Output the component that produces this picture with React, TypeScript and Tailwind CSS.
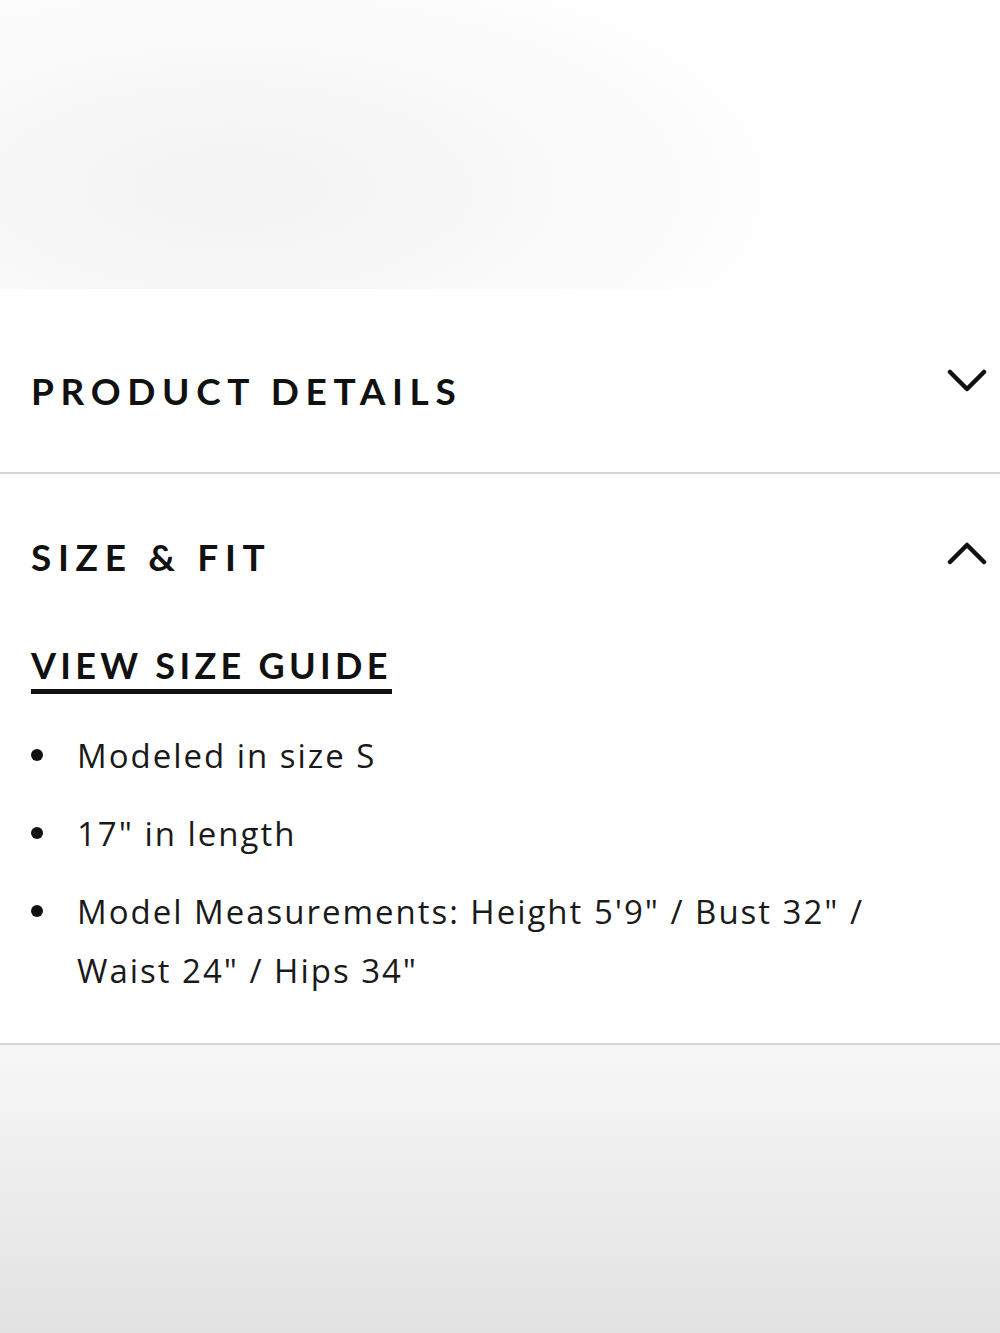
const Chevron = ({ up = false }: { up?: boolean }) => (
  <svg width="40" height="26" viewBox="0 0 40 26" fill="none" className={up ? "rotate-180" : ""}>
    <polyline points="3,4 20,21 37,4" stroke="#111" strokeWidth="4.5" strokeLinecap="round" strokeLinejoin="round" />
  </svg>
);

const bullets = [
  "Modeled in size S",
  "17\" in length",
  "Model Measurements: Height 5'9\" / Bust 32\" / Waist 24\" / Hips 34\"",
];

export default function App() {
  return (
    <div className="w-[1000px] min-h-[1333px] bg-white flex flex-col">
      <div className="h-[289px] bg-[radial-gradient(ellipse_60%_90%_at_23%_65%,#f3f3f3_0%,#f8f8f8_45%,#ffffff_100%)]" />

      <div className="bg-white">
        <div className="h-[185px] flex items-center justify-between pl-[31px] pr-[13px] border-b-2 border-[#d6d6d6]">
          <h2 className="pt-[20px] font-['Lato'] font-bold text-[37px] leading-none tracking-[0.18em] text-[#111]">
            PRODUCT DETAILS
          </h2>
          <Chevron />
        </div>

        <div className="pl-[31px] pr-[13px] pb-[43px] border-b-2 border-[#d6d6d6]">
          <div className="h-[158px] flex items-center justify-between">
            <h2 className="pt-[6px] font-['Lato'] font-bold text-[37px] leading-none tracking-[0.18em] text-[#111]">
              SIZE &amp; FIT
            </h2>
            <Chevron up />
          </div>
          <a href="#" className="mt-[15px] inline-block font-['Lato'] font-bold text-[36px] leading-none tracking-[0.12em] text-[#111] border-b-[5px] border-[#111] pb-[6px]">
            VIEW SIZE GUIDE
          </a>
          <ul className="mt-[32px] flex flex-col gap-[19px] font-['Open_Sans'] text-[33px] leading-[59px] tracking-[0.06em] text-[#1a1a1a]">
            {bullets.map((b) => (
              <li key={b} className="flex">
                <span className="w-[46px] shrink-0 flex items-start pt-[23px]">
                  <span className="w-[12px] h-[12px] rounded-full bg-[#111]" />
                </span>
                <span className="max-w-[810px]">{b}</span>
              </li>
            ))}
          </ul>
        </div>
      </div>

      <div className="flex-1 bg-[linear-gradient(to_bottom,#f7f7f7,#e2e2e2)]" />
    </div>
  );
}
